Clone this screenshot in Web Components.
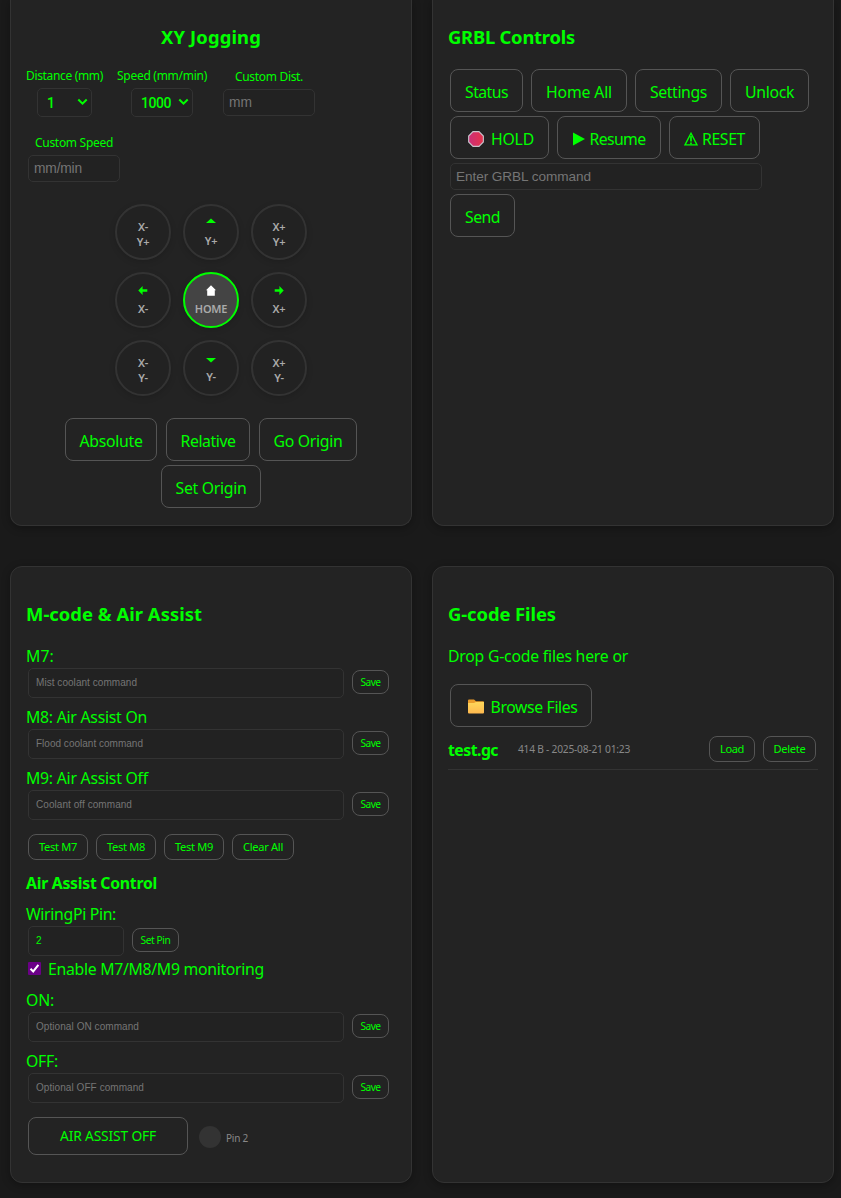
<!DOCTYPE html>
<html lang="en">
<head>
<meta charset="utf-8">
<title>CNC Control</title>
<style>
  html, body { margin: 0; height: 1198px; overflow: hidden; background: #1a1a1a; }
  body { font-family: "Noto Sans", sans-serif; color: #0f0; }
</style>
</head>
<body>
<cnc-app></cnc-app>
<script>
const define = (name, html, setup) => {
  const template = document.createElement('template');
  template.innerHTML = html;
  customElements.define(name, class extends HTMLElement {
    connectedCallback() {
      if (this.shadowRoot) return;
      const root = this.attachShadow({ mode: 'open' });
      root.append(template.content.cloneNode(true));
      if (setup) setup(this, root);
    }
  });
};
const px = (host, map) => {
  for (const [attr, prop] of Object.entries(map))
    if (host.hasAttribute(attr)) host.style.setProperty(prop, host.getAttribute(attr) + 'px');
};

/* A single line of text tracked to a given measure. */
define('fit-text', `
  <style>
    :host { display: block; flex: none; white-space: nowrap; font-size: 15.8px; line-height: 20px; height: 20px; }
    :host([bold]) { font-weight: 700; }
    :host([arial]) { font-family: "Liberation Sans", sans-serif; }
    span { display: inline-block; }
  </style><span><slot></slot></span>`, (host, root) => {
  px(host, { size: 'font-size', w: 'width', x: 'margin-left', y: 'margin-top' });
  const span = root.querySelector('span');
  const n = host.textContent.length;
  const natural = span.getBoundingClientRect().width;
  span.style.letterSpacing = ((+host.getAttribute('w') - natural) / n).toFixed(3) + 'px';
});

define('ui-button', `
  <style>
    :host { display: block; flex: none; height: 43px; }
    button { all: unset; box-sizing: border-box; width: 100%; height: 100%; display: flex; align-items: center;
      justify-content: center; border: 1px solid #555; border-radius: 8px; background: #232323; color: #0f0; padding-top: 2px; }
    :host([h]) button { padding: 0 0 1px; }
  </style><button><slot></slot></button>`, host => px(host, { w: 'width', h: 'height' }));

define('ui-field', `
  <style>
    :host { display: flex; align-items: center; flex: none; box-sizing: border-box; height: 30px; padding-left: 7px;
      border: 1px solid #333; border-radius: 5px; background: #222; color: #757575; }
    :host([big]) { height: 27px; padding-left: 5px; }
    :host([value]) { color: #0f0; }
  </style><slot></slot>`, host => px(host, { w: 'width', h: 'height' }));

define('ui-select', `
  <style>
    :host { display: flex; align-items: center; justify-content: space-between; box-sizing: border-box; height: 29px;
      padding: 0 3px 0 9px; border: 1px solid #333; border-radius: 5px; background: #222; font-family: Roboto, sans-serif; font-weight: 500; }
    svg { display: block; margin-top: -1px; }
  </style><slot></slot>
  <svg width="11" height="8" viewBox="0 0 11 8"><path d="M1.3 1.5 5.5 5.7 9.7 1.5" fill="none" stroke="#0f0" stroke-width="2"/></svg>`,
  host => px(host, { w: 'width' }));

define('ui-panel', `
  <style>
    :host { display: block; box-sizing: border-box; width: 402px; padding: 0 15px; background: #232323;
      border: 1px solid #333; border-radius: 12px; box-shadow: 0 2px 8px rgba(0,0,0,.3); }
    :host([top]) { border-top: 0; border-radius: 0 0 12px 12px; }
  </style><slot></slot>`);

define('ui-row', `
  <style>:host { display: flex; align-items: flex-start; gap: 8px; padding-left: 2px; }
    :host([center]) { justify-content: center; padding: 0; gap: 9px; }
    :host([mid]) { align-items: center; }
  </style><slot></slot>`, host => px(host, { y: 'margin-top', gap: 'gap' }));

define('labelled-control', `
  <style>:host { display: flex; flex-direction: column; align-items: center; flex: none; }</style>
  <slot></slot>`, host => px(host, { w: 'width', y: 'margin-top' }));

const glyphs = {
  up: '<path fill="#0f0" d="M0 6 5 1.5 10 6Z"/>',
  down: '<path fill="#0f0" d="M0 5h10L5 9.5Z"/>',
  left: '<path fill="#0f0" d="M.3 5.5 4.6 1v3.3h4.7v2.4H4.6V10Z"/>',
  right: '<path fill="#0f0" d="M9.7 5.5 5.4 1v3.3H.7v2.4h4.7V10Z"/>',
  home: '<path fill="#fff" d="M5 .3 10 5.3H8.8v5.5H1.2V5.3H0Z"/>'
};
define('jog-key', `
  <style>
    :host { display: flex; flex-direction: column; align-items: center; box-sizing: border-box; width: 56px; height: 56px;
      border: 2px solid #333; border-radius: 50%; background: #222; color: #aaa; font-weight: 600;
      box-shadow: 0 2px 6px rgba(0,0,0,.15); padding-top: 13px; }
    :host([icon]) { padding-top: 11px; }
    :host([icon=home]) { background: #444; border-color: #0f0; }
    svg { display: block; width: 10px; height: 11px; margin-bottom: 5px; }
    svg:empty { display: none; }
  </style><svg viewBox="0 0 10 11"></svg><slot></slot>`, (host, root) => {
  if (host.hasAttribute('icon')) root.querySelector('svg').innerHTML = glyphs[host.getAttribute('icon')];
});
define('jog-label', `
  <style>:host { display: block; font-size: 11px; line-height: 15px; letter-spacing: -.25px; }</style><slot></slot>`);

define('jog-pad', `
  <style>:host { display: grid; grid-template-columns: repeat(3, 56px); gap: 12px; justify-content: center; margin-top: 22px; }</style>
  <jog-key><jog-label>X-</jog-label><jog-label>Y+</jog-label></jog-key>
  <jog-key icon="up"><jog-label>Y+</jog-label></jog-key>
  <jog-key><jog-label>X+</jog-label><jog-label>Y+</jog-label></jog-key>
  <jog-key icon="left"><jog-label>X-</jog-label></jog-key>
  <jog-key icon="home"><jog-label>HOME</jog-label></jog-key>
  <jog-key icon="right"><jog-label>X+</jog-label></jog-key>
  <jog-key><jog-label>X-</jog-label><jog-label>Y-</jog-label></jog-key>
  <jog-key icon="down"><jog-label>Y-</jog-label></jog-key>
  <jog-key><jog-label>X+</jog-label><jog-label>Y-</jog-label></jog-key>`);

define('jogging-panel', `
  <style>
    :host { display: block; } ui-panel { height: 526px; padding-top: 27px; }
    fit-text[bold] { margin: 0 auto; } .controls { display: flex; align-items: flex-start; height: 67px; margin-top: 19px; }
  </style>
  <ui-panel top>
    <fit-text bold size="18.4" w="100">XY Jogging</fit-text>
    <div class="controls">
      <labelled-control w="77"><fit-text size="12" w="77">Distance (mm)</fit-text>
        <ui-select w="55" style="margin-top:2px"><fit-text size="14" w="8">1</fit-text></ui-select></labelled-control>
      <labelled-control w="90" style="margin-left:14px"><fit-text size="12" w="90">Speed (mm/min)</fit-text>
        <ui-select w="62" style="margin-top:2px"><fit-text size="14" w="30">1000</fit-text></ui-select></labelled-control>
      <labelled-control w="92" y="1" style="margin-left:16px"><fit-text size="12" w="68">Custom Dist.</fit-text>
        <ui-field big w="92" style="margin-top:2px"><fit-text arial size="13.8" w="23">mm</fit-text></ui-field></labelled-control>
    </div>
    <labelled-control w="92" style="margin-left:2px"><fit-text size="12" w="78">Custom Speed</fit-text>
      <ui-field big w="92" style="margin-top:2px"><fit-text arial size="13.8" w="48">mm/min</fit-text></ui-field></labelled-control>
    <jog-pad></jog-pad>
    <ui-row center y="22"><ui-button w="92"><fit-text w="63">Absolute</fit-text></ui-button><ui-button w="84"><fit-text w="55">Relative</fit-text></ui-button><ui-button w="98"><fit-text w="69">Go Origin</fit-text></ui-button></ui-row>
    <ui-row center y="4"><ui-button w="100"><fit-text w="71">Set Origin</fit-text></ui-button></ui-row>
  </ui-panel>`);

define('grbl-panel', `
  <style>:host { display: block; } ui-panel { height: 526px; padding-top: 27px; } svg { display: block; flex: none; }</style>
  <ui-panel top>
    <fit-text bold size="18.4" w="127">GRBL Controls</fit-text>
    <ui-row y="22"><ui-button w="73"><fit-text w="43">Status</fit-text></ui-button><ui-button w="96"><fit-text w="66">Home All</fit-text></ui-button><ui-button w="87"><fit-text w="57">Settings</fit-text></ui-button><ui-button w="79"><fit-text w="49">Unlock</fit-text></ui-button></ui-row>
    <ui-row y="4">
      <ui-button w="99"><svg width="16" height="16" viewBox="0 0 17 17" style="margin-left:3px"><defs><linearGradient id="r"><stop stop-color="#ca2e78"/><stop offset="1" stop-color="#e6334a"/></linearGradient></defs><path d="M5.3.7h6.4l4.6 4.6v6.4l-4.6 4.6H5.3L.7 11.7V5.3Z" fill="url(#r)" stroke="#c9c3cc" stroke-width="1.2"/></svg><fit-text w="43" x="7">HOLD</fit-text></ui-button>
      <ui-button w="104"><svg width="12" height="14" viewBox="0 0 12 14"><path d="M0 .5 12 7 0 13.5Z" fill="#0f0"/></svg><fit-text w="56" x="5">Resume</fit-text></ui-button>
      <ui-button w="91"><svg width="14" height="14" viewBox="0 0 14 14"><path d="M7 1.3 13 12.9H1Z" fill="none" stroke="#0f0" stroke-width="1.4"/><path d="M7 4v5.5M7 10.5v1.7" stroke="#0f0" stroke-width="1.7"/></svg><fit-text w="43" x="4">RESET</fit-text></ui-button>
    </ui-row>
    <ui-row y="4"><ui-field big w="312"><fit-text arial size="13.6" w="135">Enter GRBL command</fit-text></ui-field></ui-row>
    <ui-row y="4"><ui-button w="65"><fit-text w="35">Send</fit-text></ui-button></ui-row>
  </ui-panel>`);

define('command-entry', `
  <style>:host { display: block; height: 61px; } ui-button { margin-top: 2px; }</style>
  <slot name="label"></slot>
  <ui-row y="2"><ui-field w="316"><slot></slot></ui-field><ui-button w="37" h="24"><fit-text size="10.2" w="20">Save</fit-text></ui-button></ui-row>`);

define('mcode-panel', `
  <style>
    :host { display: block; } ui-panel { height: 617px; padding-top: 37px; }
    .check { display: block; width: 13px; height: 13px; background: #6b0087; border-radius: 1px; margin-top: -2px; }
    .lamp { width: 22px; height: 22px; border-radius: 50%; background: #333; margin-left: 3px; margin-top: 1px; }
  </style>
  <ui-panel>
    <fit-text bold size="18.4" w="176">M-code &amp; Air Assist</fit-text>
    <command-entry style="margin-top:22px"><fit-text slot="label" w="28">M7:</fit-text><fit-text arial size="10" w="101">Mist coolant command</fit-text></command-entry>
    <command-entry><fit-text slot="label" w="121">M8: Air Assist On</fit-text><fit-text arial size="10" w="107">Flood coolant command</fit-text></command-entry>
    <command-entry><fit-text slot="label" w="122">M9: Air Assist Off</fit-text><fit-text arial size="10" w="96">Coolant off command</fit-text></command-entry>
    <ui-row y="5"><ui-button w="60" h="26"><fit-text size="11.1" w="38">Test M7</fit-text></ui-button><ui-button w="60" h="26"><fit-text size="11.1" w="38">Test M8</fit-text></ui-button><ui-button w="60" h="26"><fit-text size="11.1" w="38">Test M9</fit-text></ui-button><ui-button w="62" h="26"><fit-text size="11.1" w="40">Clear All</fit-text></ui-button></ui-row>
    <fit-text bold size="15.8" w="131" y="13">Air Assist Control</fit-text>
    <fit-text w="90" y="11">WiringPi Pin:</fit-text>
    <ui-row y="2"><ui-field value w="96"><fit-text arial size="10" w="6">2</fit-text></ui-field><ui-button w="47" h="24" style="margin-top:2px"><fit-text size="10.2" w="30">Set Pin</fit-text></ui-button></ui-row>
    <ui-row y="3" mid gap="7"><svg class="check" viewBox="0 0 13 13"><path d="M2.5 6.8 5.2 9.4 10.4 2.8" fill="none" stroke="#fff" stroke-width="2"/></svg><fit-text w="216">Enable M7/M8/M9 monitoring</fit-text></ui-row>
    <command-entry style="margin-top:11px"><fit-text slot="label" w="28">ON:</fit-text><fit-text arial size="10" w="103">Optional ON command</fit-text></command-entry>
    <command-entry><fit-text slot="label" w="32">OFF:</fit-text><fit-text arial size="10" w="108">Optional OFF command</fit-text></command-entry>
    <ui-row y="5" mid><ui-button w="160" h="38"><fit-text size="13.8" w="96">AIR ASSIST OFF</fit-text></ui-button><div class="lamp"></div><fit-text size="10" w="22" x="-3" y="4" style="color:#888">Pin 2</fit-text></ui-row>
  </ui-panel>`);

define('file-row', `
  <style>:host { display: flex; align-items: center; height: 34px; margin-top: 9px; border-bottom: 1px solid #333; box-sizing: border-box; padding: 0 2px 7px 0; }
    .actions { display: flex; gap: 8px; margin-left: auto; }</style>
  <fit-text bold size="15.8" w="50" y="1">test.gc</fit-text>
  <fit-text size="10.2" w="112" x="20" y="0" style="color:#888">414 B - 2025-08-21 01:23</fit-text>
  <div class="actions"><ui-button w="46" h="26"><fit-text size="11.1" w="24">Load</fit-text></ui-button><ui-button w="53" h="26"><fit-text size="11.1" w="32">Delete</fit-text></ui-button></div>`);

define('files-panel', `
  <style>:host { display: block; } ui-panel { height: 617px; padding-top: 37px; } svg { display: block; flex: none; }</style>
  <ui-panel>
    <fit-text bold size="18.4" w="108">G-code Files</fit-text>
    <fit-text w="180" y="22">Drop G-code files here or</fit-text>
    <ui-row y="18"><ui-button w="142"><svg width="16" height="15" viewBox="0 0 16 15" style="margin-left:3px"><defs><linearGradient id="f" x2="0" y2="1"><stop stop-color="#ffd75a"/><stop offset="1" stop-color="#ffb94f"/></linearGradient></defs><path d="M0 1.5Q0 .5 1 .5h5l2 1.7h7q1 0 1 1V8H0Z" fill="#eb9c2b"/><path d="M0 4h6l2-1h8v10.5q0 1-1 1H1q-1 0-1-1Z" fill="url(#f)"/></svg><fit-text w="87" x="7">Browse Files</fit-text></ui-button></ui-row>
    <file-row></file-row>
  </ui-panel>`);

define('cnc-app', `
  <style>:host { display: grid; grid-template-columns: 402px 402px; grid-template-rows: 526px 617px; column-gap: 20px; row-gap: 40px; margin-left: 10px; width: 824px; }</style>
  <jogging-panel></jogging-panel><grbl-panel></grbl-panel><mcode-panel></mcode-panel><files-panel></files-panel>`);
</script>
</body>
</html>
